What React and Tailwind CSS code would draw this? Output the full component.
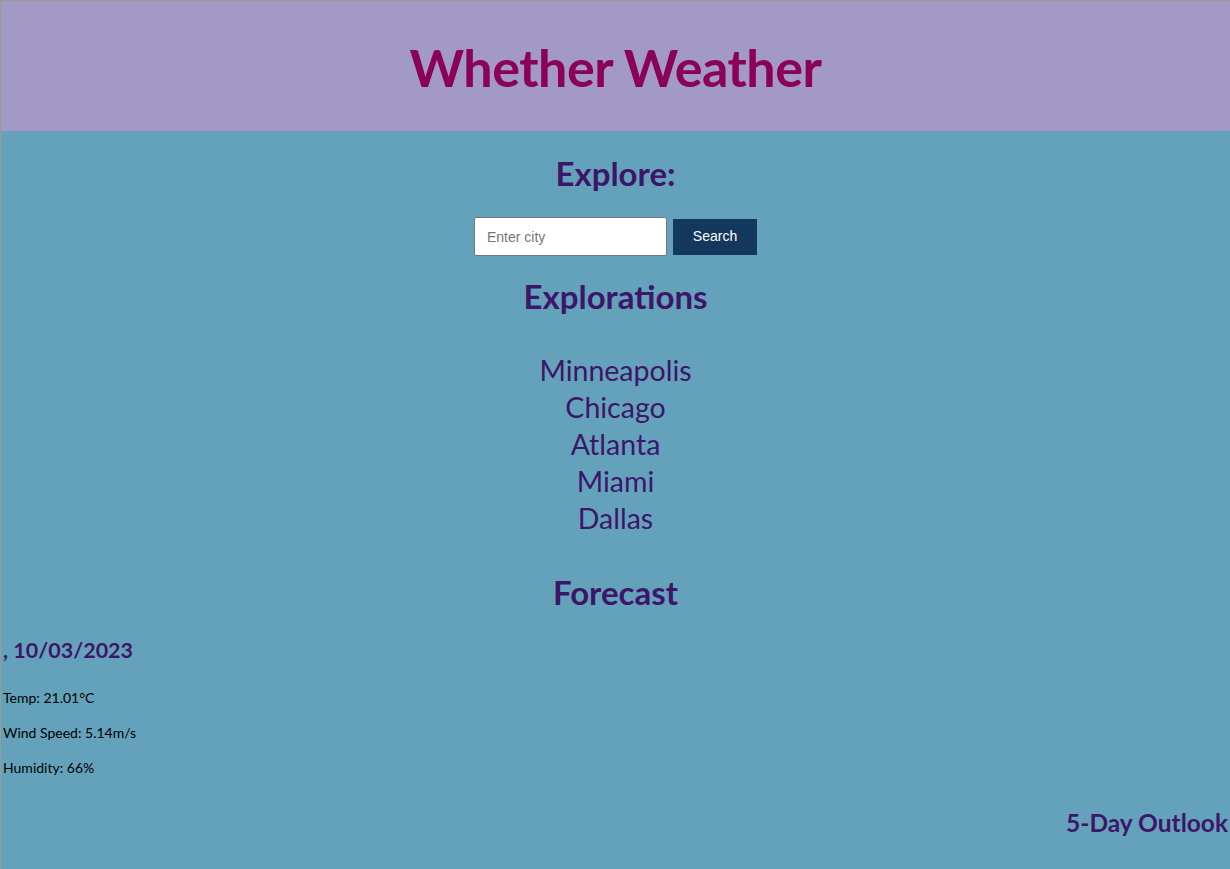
import { useState } from "react";

const cities = ["Minneapolis", "Chicago", "Atlanta", "Miami", "Dallas"];

export default function App() {
    const [city, setCity] = useState("");
    return (
        <div className="min-h-[869px] bg-[#64a2bc] border-l border-t border-[#9a9a9a] font-['Lato','Noto_Sans',sans-serif]">
            <header className="h-[130px] bg-[#a299c5] flex items-center justify-center">
                <h1 className="text-[52px] font-bold text-[#8b0058] tracking-[-0.5px] leading-none pt-[1px]">Whether Weather</h1>
            </header>
            <main className="text-[#3d1669]">
                <section className="flex flex-col items-center">
                    <h2 className="mt-[22px] text-[33px] font-bold leading-[40px]">Explore:</h2>
                    <div className="mt-[24px] flex items-center gap-[6px]">
                        <input
                            type="text"
                            placeholder="Enter city"
                            value={city}
                            onChange={e => setCity(e.target.value)}
                            className="w-[193px] h-[39px] bg-white border border-[#767676] rounded-[2px] px-3 text-[14px] text-black placeholder:text-[#757575] font-['Liberation_Sans',Arial,sans-serif] outline-none"
                        />
                        <button className="w-[84px] h-[36px] bg-[#14375e] text-white text-[14px] font-['Liberation_Sans',Arial,sans-serif]">
                            Search
                        </button>
                    </div>
                    <h2 className="mt-[20px] text-[33px] font-bold leading-[40px]">Explorations</h2>
                    <ul className="mt-[36px] flex flex-col items-center text-[28.5px] leading-[37px]">
                        {cities.map(c => (
                            <li key={c}>{c}</li>
                        ))}
                    </ul>
                    <h2 className="mt-[35px] text-[33px] font-bold leading-[40px]">Forecast</h2>
                </section>
                <section className="px-[2px]">
                    <h3 className="mt-[21px] text-[21.5px] font-bold leading-[34px]">, 10/03/2023</h3>
                    <div className="text-black text-[14px] leading-[20px]">
                        <p className="mt-[21px]">Temp: 21.01°C</p>
                        <p className="mt-[15px]">Wind Speed: 5.14m/s</p>
                        <p className="mt-[15px]">Humidity: 66%</p>
                    </div>
                    <h3 className="mt-[28px] text-right text-[24.5px] font-bold leading-[34px]">5-Day Outlook</h3>
                </section>
            </main>
        </div>
    );
}
